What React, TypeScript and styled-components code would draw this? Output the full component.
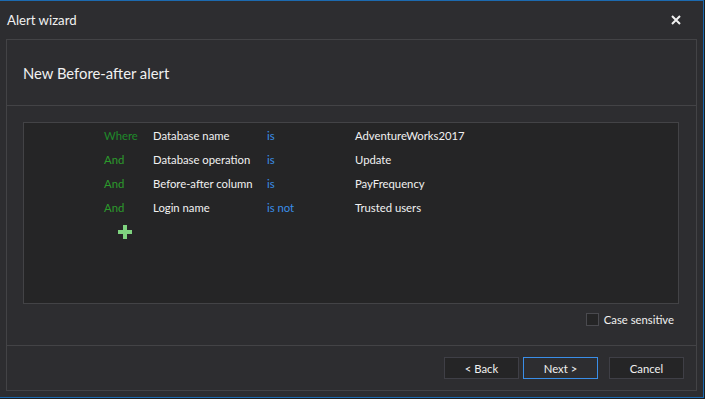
import React, { useState } from "react";
import styled, { createGlobalStyle } from "styled-components";

const GlobalStyle = createGlobalStyle`
  html, body {
    margin: 0;
    padding: 0;
    background: #1e1e1e;
    font-family: Lato, "Noto Sans", sans-serif;
  }
`;

const Window = styled.div`
  width: 703px;
  height: 396px;
  background: #2d2d30;
  border-top: 1px solid #1c6ab0;
  border-right: 1px solid #1c6ab0;
  border-bottom: 1px solid #1c6ab0;
  display: flex;
  flex-direction: column;
  color: #f1f1f1;
`;

const TitleBar = styled.div`
  height: 38px;
  display: flex;
  align-items: center;
  justify-content: space-between;
  padding: 0 20px 0 7px;
  font-size: 13.2px;
`;

const CloseButton = styled.div`
  width: 14px;
  height: 14px;
  display: flex;
  align-items: center;
  justify-content: center;
`;

const Panel = styled.div`
  flex: 1;
  margin: 0 6px 6px 6px;
  border: 1px solid #434346;
  display: flex;
  flex-direction: column;
`;

const Header = styled.div`
  height: 65px;
  border-bottom: 1px solid #434346;
  display: flex;
  align-items: center;
  padding-left: 16px;
  font-size: 14.8px;
`;

const Body = styled.div`
  flex: 1;
  padding: 16px 17px 0 16px;
  border-bottom: 1px solid #434346;
  display: flex;
  flex-direction: column;
`;

const ConditionBox = styled.div`
  height: 180px;
  background: #252526;
  border: 1px solid #434346;
  padding: 0 0 0 80px;
  display: flex;
  flex-direction: column;
`;

const Row = styled.div`
  display: grid;
  grid-template-columns: 49px 114px 88px 1fr;
  height: 24px;
  align-items: center;
  font-size: 11.3px;
  white-space: nowrap;
`;

const Operator = styled.span<{ $first?: boolean }>`
  color: ${(p) => (p.$first ? "#1f8a2a" : "#2c9b2c")};
`;

const Field = styled.span`
  color: #f1f1f1;
`;

const Verb = styled.span`
  color: #3a8ee8;
`;

const AddButton = styled.div`
  margin: 4px 0 0 14px;
  width: 14px;
  height: 14px;
`;

const OptionRow = styled.div`
  display: flex;
  justify-content: flex-end;
  align-items: center;
  gap: 5px;
  padding: 9px 5px 0 0;
  font-size: 11.3px;
`;

const CheckBox = styled.div<{ $checked: boolean }>`
  width: 11px;
  height: 11px;
  border: 1px solid #4a4a4f;
  background: ${(p) => (p.$checked ? "#3a8ee8" : "#252526")};
`;

const Footer = styled.div`
  height: 44px;
  display: flex;
  align-items: center;
  justify-content: flex-end;
  padding-right: 12px;
`;

const Button = styled.button<{ $primary?: boolean; $gap?: number }>`
  width: 75px;
  height: 22px;
  margin-left: ${(p) => p.$gap ?? 0}px;
  background: ${(p) => (p.$primary ? "#2d2d30" : "#252526")};
  border: 1px solid ${(p) => (p.$primary ? "#3a8ee8" : "#3f3f46")};
  color: #f1f1f1;
  font-family: inherit;
  font-size: 11.3px;
  padding: 0;
`;

const conditions = [
  { op: "Where", field: "Database name", verb: "is", value: "AdventureWorks2017" },
  { op: "And", field: "Database operation", verb: "is", value: "Update" },
  { op: "And", field: "Before-after column", verb: "is", value: "PayFrequency" },
  { op: "And", field: "Login name", verb: "is not", value: "Trusted users" },
];

const App = () => {
  const [caseSensitive, setCaseSensitive] = useState(false);

  return (
    <>
      <GlobalStyle />
      <Window>
        <TitleBar>
          <span>Alert wizard</span>
          <CloseButton>
            <svg width="10" height="10" viewBox="0 0 10 10">
              <path d="M1 1 L9 9 M9 1 L1 9" stroke="#f1f1f1" strokeWidth="2" />
            </svg>
          </CloseButton>
        </TitleBar>
        <Panel>
          <Header>New Before-after alert</Header>
          <Body>
            <ConditionBox>
              {conditions.map((c, i) => (
                <Row key={i}>
                  <Operator $first={i === 0}>{c.op}</Operator>
                  <Field>{c.field}</Field>
                  <Verb>{c.verb}</Verb>
                  <Field>{c.value}</Field>
                </Row>
              ))}
              <AddButton>
                <svg width="14" height="14" viewBox="0 0 14 14">
                  <path d="M5 0 H9 V5 H14 V9 H9 V14 H5 V9 H0 V5 H5 Z" fill="#7fd37f" />
                </svg>
              </AddButton>
            </ConditionBox>
            <OptionRow onClick={() => setCaseSensitive(!caseSensitive)}>
              <CheckBox $checked={caseSensitive} />
              <span>Case sensitive</span>
            </OptionRow>
          </Body>
          <Footer>
            <Button>&lt; Back</Button>
            <Button $primary $gap={4}>Next &gt;</Button>
            <Button $gap={11}>Cancel</Button>
          </Footer>
        </Panel>
      </Window>
    </>
  );
};

export default App;
